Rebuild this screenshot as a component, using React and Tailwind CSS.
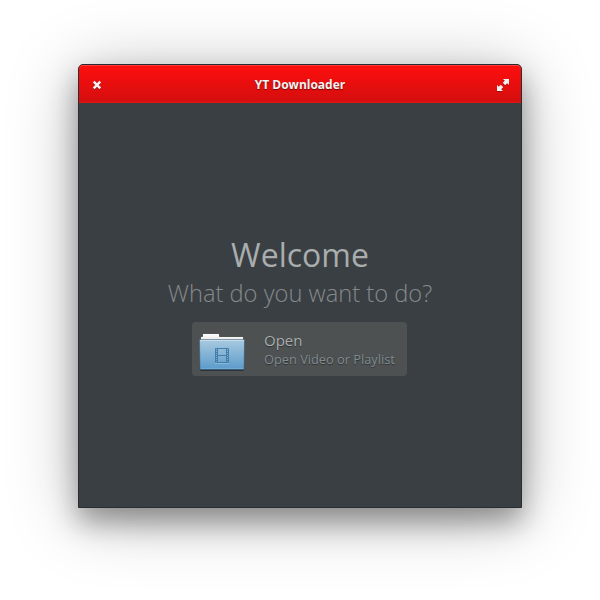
function CloseIcon() {
  return (
    <svg width="10" height="10" viewBox="0 0 10 10" className="block" aria-hidden="true">
      <path d="M1.700 2.600 8.300 9.200M8.300 2.600 1.700 9.200" stroke="#6b1010" strokeOpacity=".6" strokeWidth="2.400" />
      <path d="M1.700 1.700 8.300 8.300M8.300 1.700 1.700 8.300" stroke="#f2f2f2" strokeWidth="2.400" />
    </svg>
  );
}

function MaximizeIcon() {
  const d = "M6 0H12V6L10.200 4.200 8.200 6.200 5.800 3.800 7.800 1.800ZM0 6 1.800 7.800 3.800 5.800 6.200 8.200 4.200 10.200 6 12H0Z";
  return (
    <svg width="12" height="13" viewBox="0 0 12 13" className="block" aria-hidden="true">
      <path d={d} transform="translate(0 1)" fill="#6b1010" fillOpacity=".6" />
      <path d={d} fill="#f2f2f2" />
    </svg>
  );
}

function VideoFolderIcon() {
  const perforations = [25, 27, 29, 31, 33, 35];
  return (
    <svg width="48" height="48" viewBox="0 0 48 48" className="block" aria-hidden="true">
      <defs>
        <linearGradient id="front" x1="0" y1="0" x2="0" y2="1">
          <stop offset="0" stopColor="#a9cae0" />
          <stop offset="1" stopColor="#5c9bcb" />
        </linearGradient>
        <linearGradient id="paper" x1="0" y1="0" x2="0" y2="1">
          <stop offset="0" stopColor="#ffffff" />
          <stop offset="1" stopColor="#e9e7e4" />
        </linearGradient>
      </defs>
      <path d="M2 44h44v1q0 1-1.500 1h-41Q2 46 2 45Z" fill="#202a30" fillOpacity=".75" />
      <path d="M2.500 16V11.500h2v-3h17v3h24V16Z" fill="url(#paper)" stroke="#33393b" strokeOpacity=".75" />
      <path d="M1.500 14.500h45L46 44.500H2Z" fill="url(#front)" stroke="#33566f" strokeOpacity=".5" />
      <path d="M2 15.500h44" stroke="#c6dcea" />
      <path d="M3 43.500h42" stroke="#78afd9" strokeOpacity=".7" />
      <g fill="none" stroke="#437da8">
        <path d="M17 38.500h14" stroke="#a5cbe5" strokeOpacity=".5" />
        <path d="M17.500 23.500h13v14h-13ZM19.500 23.500v14M28.500 23.500v14M19.500 30.500h9" />
      </g>
      {perforations.map((y) => (
        <path key={y} d={`M18 ${y + 0.5}h1M29 ${y + 0.5}h1`} stroke="#437da8" />
      ))}
    </svg>
  );
}

export default function App() {
  return (
    <div className="flex h-[600px] w-[600px] justify-center bg-white pt-16 font-['Open_Sans',sans-serif]">
      <main className="flex h-[444px] w-[444px] flex-col overflow-hidden rounded-t-[5px] border border-[#2a2d2f] bg-[#3a3f43] shadow-[0_14px_28px_rgba(0,0,0,0.35),0_8px_70px_rgba(0,0,0,0.28)]">
        <header className="flex h-[38px] shrink-0 items-center justify-between rounded-t-[4px] border-b border-[#df1717] bg-linear-to-b from-[#ff0e0e] to-[#d40e0e] px-3 shadow-[inset_0_1px_0_#ff3b3b]">
          <button aria-label="Close" className="ml-[1px] mt-[2px]"><CloseIcon /></button>
          <h1 className="ml-px mt-[2px] text-[12px] font-bold leading-4 text-[#f2f2f2] [text-shadow:0_1px_1px_rgba(0,0,0,0.5)]">YT Downloader</h1>
          <button aria-label="Maximize" className="mt-[3px]"><MaximizeIcon /></button>
        </header>
        <section className="flex flex-1 flex-col items-center pt-[129px]">
          <h2 className="whitespace-nowrap text-[32px] leading-[46px] text-[#a9adad]">Welcome</h2>
          <p className="-mt-px whitespace-nowrap text-[23.700px] font-light leading-[32px] text-[#858a8b]">What do you want to do?</p>
          <button className="mr-px mt-[13px] flex h-[54px] w-[215px] items-center gap-[18px] rounded-[4px] bg-[#4d5152] pl-[6px] text-left">
            <VideoFolderIcon />
            <span className="flex flex-col whitespace-nowrap">
              <span className="text-[15px] leading-[19px] text-[#a8adad] [text-shadow:0_1px_1px_rgba(0,0,0,0.4)]">Open</span>
              <span className="text-[12.800px] leading-[18px] text-[#808b8e] [text-shadow:0_1px_1px_rgba(0,0,0,0.4)]">Open Video or Playlist</span>
            </span>
          </button>
        </section>
      </main>
    </div>
  );
}
